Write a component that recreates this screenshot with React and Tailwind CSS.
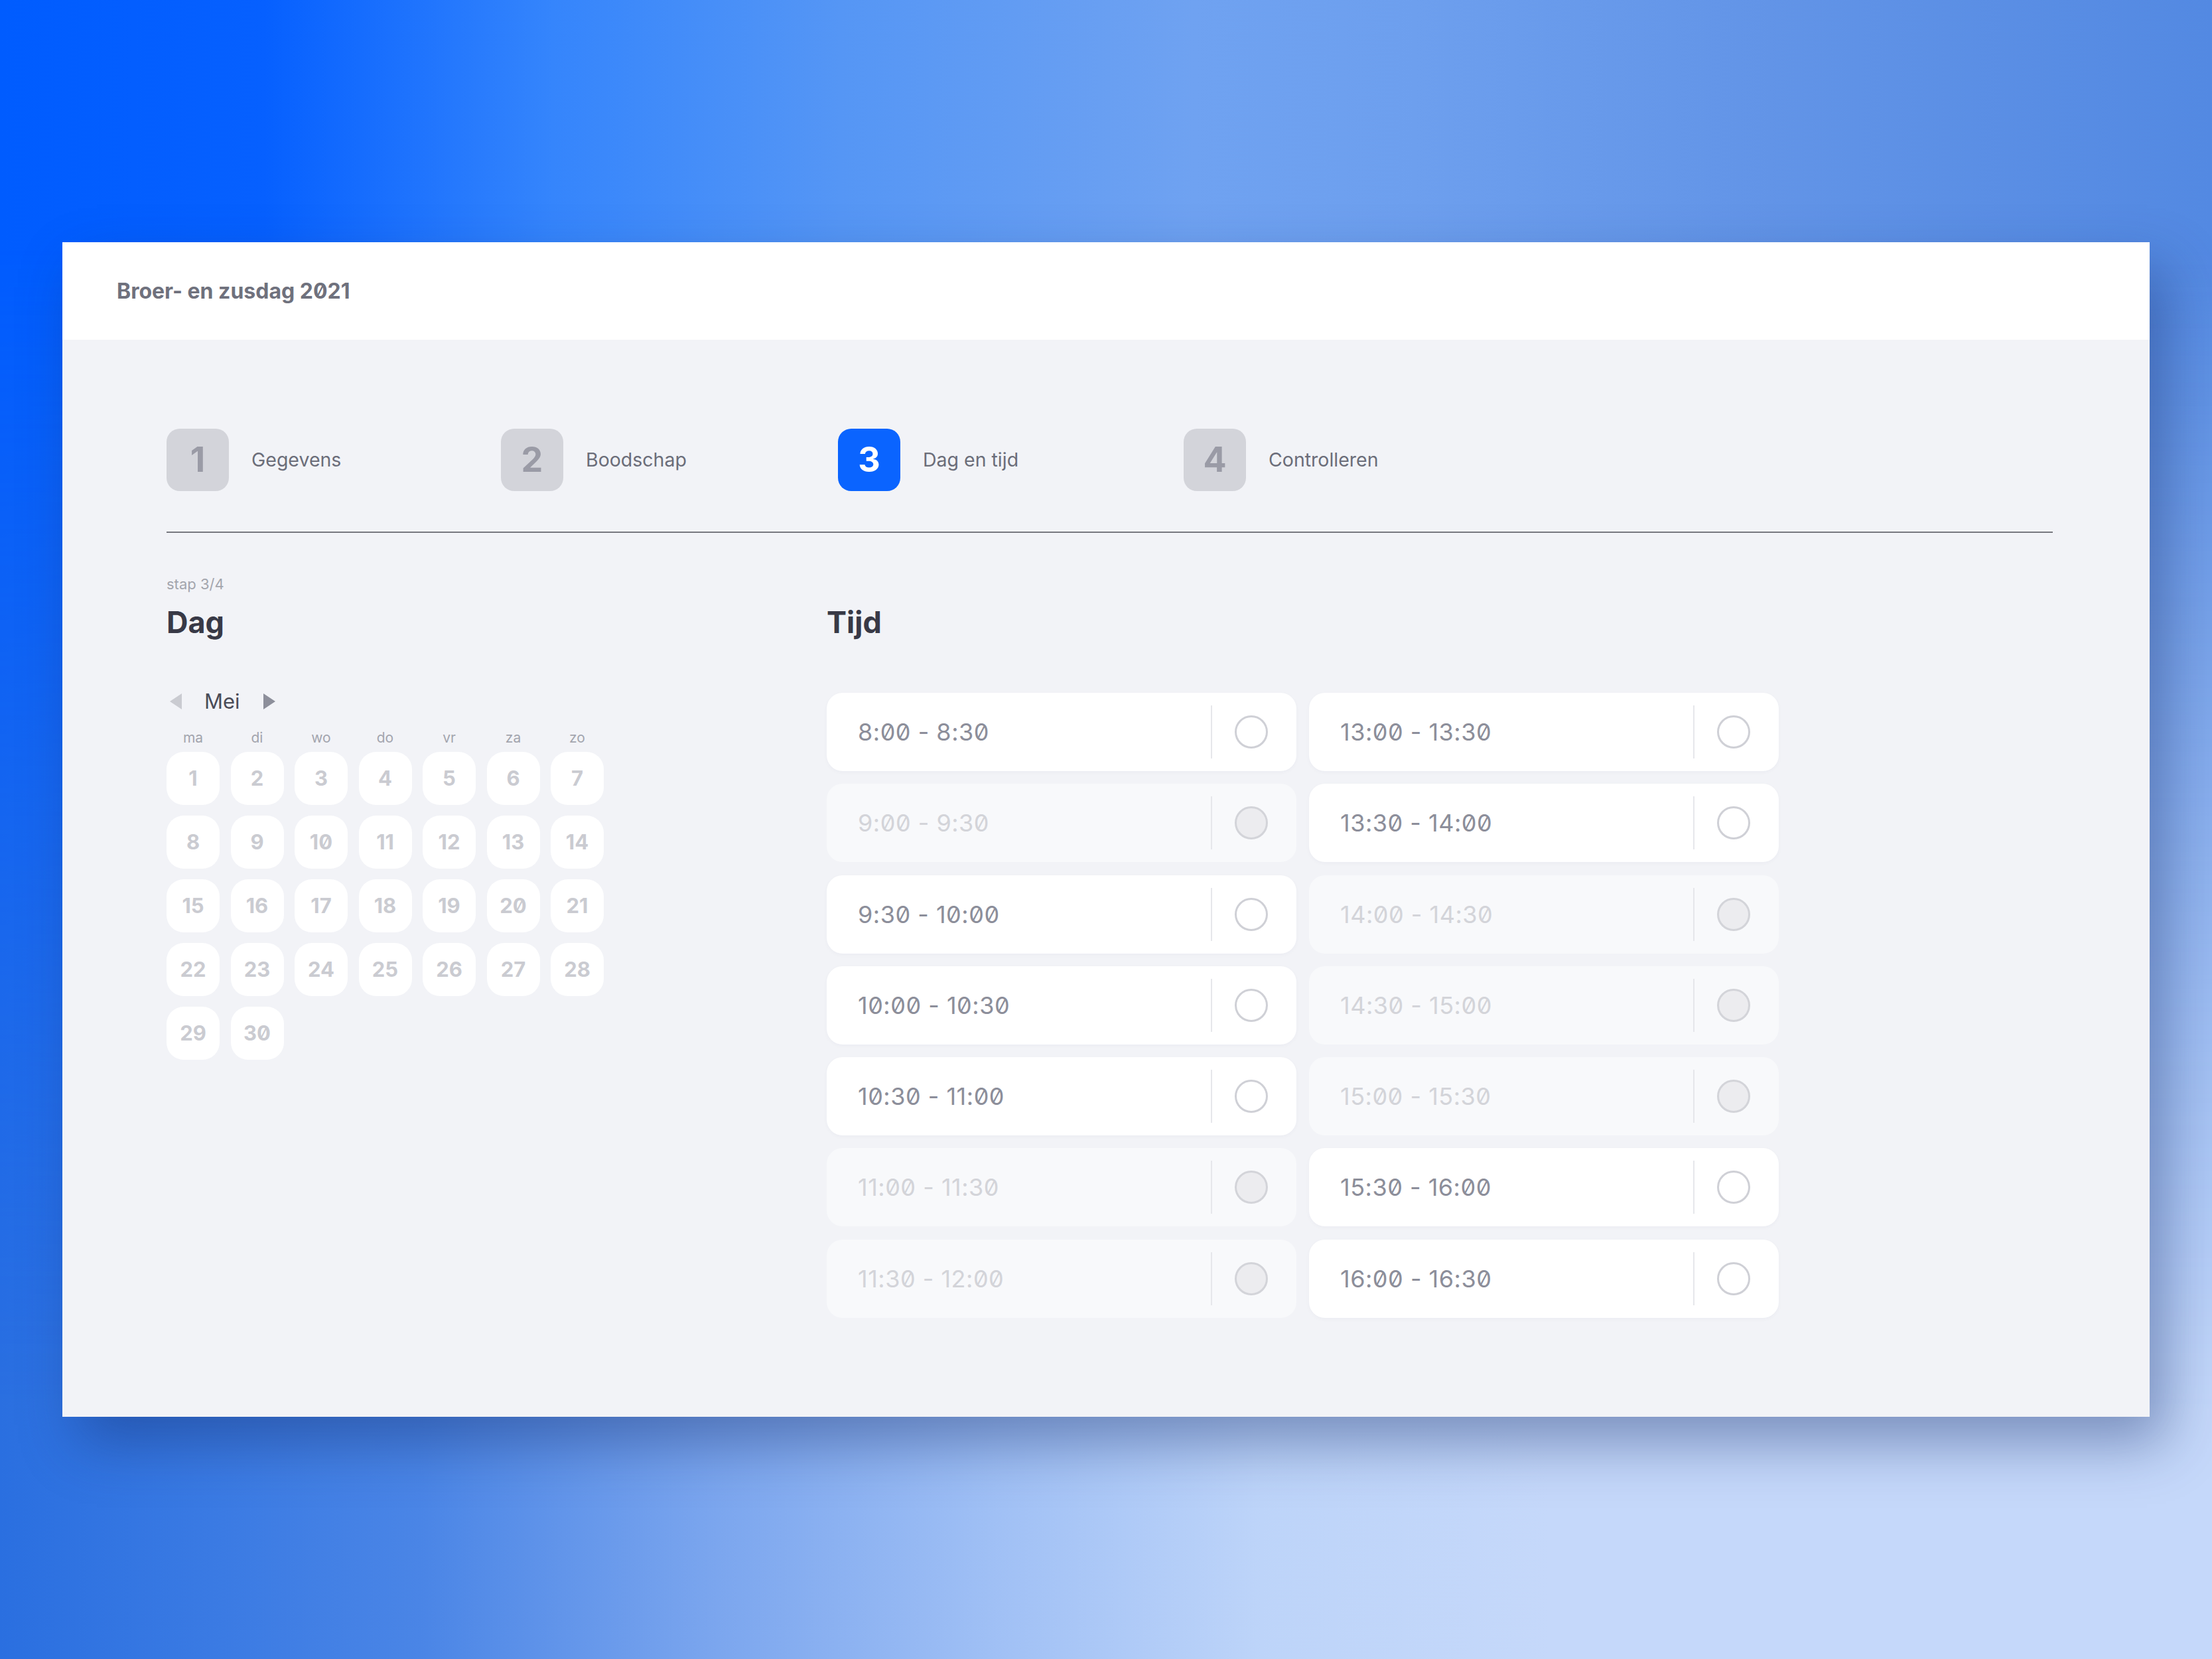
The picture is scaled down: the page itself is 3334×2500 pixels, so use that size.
import React from "react";

const steps = [
  { n: 1, label: "Gegevens", w: "w-[504px]" },
  { n: 2, label: "Boodschap", w: "w-[508px]" },
  { n: 3, label: "Dag en tijd", w: "w-[521px]", active: true },
  { n: 4, label: "Controlleren", w: "w-[400px]" },
];

const weekdays = ["ma", "di", "wo", "do", "vr", "za", "zo"];
const days = Array.from({ length: 30 }, (_, i) => i + 1);

const leftSlots = [
  ["8:00 - 8:30", true],
  ["9:00 - 9:30", false],
  ["9:30 - 10:00", true],
  ["10:00 - 10:30", true],
  ["10:30 - 11:00", true],
  ["11:00 - 11:30", false],
  ["11:30 - 12:00", false],
];

const rightSlots = [
  ["13:00 - 13:30", true],
  ["13:30 - 14:00", true],
  ["14:00 - 14:30", false],
  ["14:30 - 15:00", false],
  ["15:00 - 15:30", false],
  ["15:30 - 16:00", true],
  ["16:00 - 16:30", true],
];

const Slot = ({ time, open }) => (
  <div
    className={
      "flex items-center h-[118px] pl-[47px] pr-[43px] rounded-[24px] " +
      (open ? "bg-white shadow-[0_2px_6px_rgba(30,40,80,0.03)]" : "bg-[#f8f9fb]")
    }
  >
    <span
      className={
        "flex-1 text-[36px] tracking-[0.5px] " + (open ? "text-[#8c8e9a]" : "text-[#d3d4d9]")
      }
    >
      {time}
    </span>
    <div className="w-[2px] h-[80px] bg-[#e6e7eb]" />
    <div
      className={
        "ml-[34px] w-[50px] h-[50px] rounded-full border-[3px] " +
        (open ? "border-[#cfd0d6] bg-white" : "border-[#d3d4d9] bg-[#ececef]")
      }
    />
  </div>
);

export default function App() {
  return (
    <div className="relative w-[3334px] h-[2500px] pt-[365px] pl-[94px] font-['Inter','Noto_Sans',sans-serif] [font-feature-settings:'zero'] bg-[linear-gradient(to_right,#005cff_0%,#0660ff_12%,#3585fc_25%,#5596f5_38%,#6fa2f1_54%,#6d9fee_64%,#6294e7_80%,#5389e2_100%)] before:content-[''] before:absolute before:inset-0 before:bg-[linear-gradient(to_right,#2a6fe0_0%,#4a85e6_19%,#7aa5ee_32%,#a0c0f5_45%,#bdd4f9_57%,#c5d8fa_70%,#c5d8fa_100%)] before:[mask-image:linear-gradient(to_bottom,transparent_15%,black_85%)]">
      <div className="relative z-10 w-[3146px] h-[1770px] flex flex-col shadow-[24px_40px_80px_rgba(20,45,110,0.42)]">
        {/* header */}
        <div className="h-[147px] bg-white flex items-center pl-[82px]">
          <span className="text-[32px] font-bold text-[#6f717d]">Broer- en zusdag 2021</span>
        </div>

        {/* body */}
        <div className="flex-1 bg-[#f2f3f7] pl-[157px] pr-[146px] pt-[134px]">
          {/* steps */}
          <div className="flex items-center">
            {steps.map((s) => (
              <div key={s.n} className={"flex items-center " + s.w}>
                <div
                  className={
                    "w-[94px] h-[94px] rounded-[20px] flex items-center justify-center text-[52px] font-bold " +
                    (s.active ? "bg-[#0a64ff] text-white" : "bg-[#d3d4da] text-[#9a9ba6]")
                  }
                >
                  {s.n}
                </div>
                <span className="ml-[34px] text-[28.5px] text-[#6b6d79]">{s.label}</span>
              </div>
            ))}
          </div>

          <div className="mt-[61px] h-[2px] bg-[#77787f]" />

          <div className="flex">
            {/* Dag */}
            <div className="w-[995px] pt-[62px]">
              <div className="text-[22px] leading-[30px] text-[#a3a5ad]">stap 3/4</div>
              <div className="mt-[15px] text-[45px] leading-[56px] font-bold text-[#383946]">Dag</div>

              <div className="mt-[71px] h-[40px] flex items-center pl-[4px]">
                <svg width="20" height="26" viewBox="0 0 20 26">
                  <path d="M19 1 L1 13 L19 25 Z" fill="#cacbd1" />
                </svg>
                <span className="ml-[33px] text-[31px] text-[#4a4b57]">Mei</span>
                <svg className="ml-[34px]" width="20" height="26" viewBox="0 0 20 26">
                  <path d="M1 1 L19 13 L1 25 Z" fill="#8d8f9b" />
                </svg>
              </div>

              <div className="mt-[23px] grid grid-cols-[repeat(7,80px)] gap-x-[16.5px]">
                {weekdays.map((d) => (
                  <div key={d} className="text-center text-[21px] leading-[24px] text-[#a3a5ae]">
                    {d}
                  </div>
                ))}
              </div>

              <div className="mt-[9px] grid grid-cols-[repeat(7,80px)] gap-x-[16.5px] gap-y-[16px]">
                {days.map((d) => (
                  <div
                    key={d}
                    className="w-[80px] h-[80px] rounded-[26px] bg-white flex items-center justify-center text-[31px] font-bold text-[#cacbd1]"
                  >
                    {d}
                  </div>
                ))}
              </div>
            </div>

            {/* Tijd */}
            <div className="pt-[107px]">
              <div className="text-[45px] leading-[56px] font-bold text-[#383946]">Tijd</div>
              <div className="mt-[78px] flex gap-x-[19px]">
                {[leftSlots, rightSlots].map((col, ci) => (
                  <div key={ci} className="w-[708px] flex flex-col gap-y-[19.3px]">
                    {col.map(([t, open]) => (
                      <Slot key={t} time={t} open={open} />
                    ))}
                  </div>
                ))}
              </div>
            </div>
          </div>
        </div>
      </div>
    </div>
  );
}
